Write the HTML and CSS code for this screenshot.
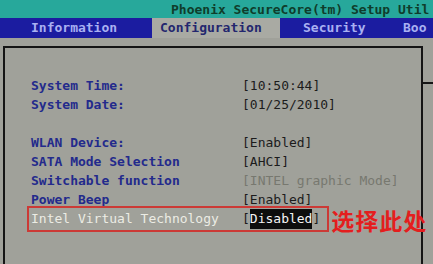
FILE: index.html
```html
<!DOCTYPE html>
<html>
<head>
<meta charset="utf-8">
<link rel="stylesheet" href="styles.css">
</head>
<body>
<div class="screen">
  <div class="title">Phoenix SecureCore(tm) Setup Util</div>
  <div class="menu">
    <div class="tab tab-info">Information</div>
    <div class="tab tab-config active">Configuration</div>
    <div class="tab tab-sec">Security</div>
    <div class="tab tab-boot">Boo</div>
  </div>
  <div class="main">
    <div class="panel">
      <div class="row"><span class="label">System Time:</span><span class="value">[10:50:44]</span></div>
      <div class="row"><span class="label">System Date:</span><span class="value">[01/25/2010]</span></div>
      <div class="row"></div>
      <div class="row"><span class="label">WLAN Device:</span><span class="value">[Enabled]</span></div>
      <div class="row"><span class="label">SATA Mode Selection</span><span class="value">[AHCI]</span></div>
      <div class="row"><span class="label">Switchable function</span><span class="value dim">[INTEL graphic Mode]</span></div>
      <div class="row"><span class="label">Power Beep</span><span class="value">[Enabled]</span></div>
      <div class="row row-mark">
        <div class="mark"><span class="label sel">Intel Virtual Technology</span><span class="value">[<span class="hl">Disabled</span>]</span></div>
        <span class="note">选择此处</span>
      </div>
    </div>
    <div class="help"></div>
  </div>
</div>
</body>
</html>
```

FILE: styles.css
```css
html, body {
  margin: 0;
  padding: 0;
}
body {
  width: 433px;
  height: 264px;
  overflow: hidden;
  background: #a0a19a;
  font-family: "DejaVu Sans Mono", "Liberation Mono", monospace;
  font-size: 13px;
  font-weight: bold;
}
.screen {
  width: 433px;
  height: 264px;
  overflow: hidden;
}
.title {
  height: 18px;
  line-height: 19px;
  background: #27a89b;
  color: #0f3d2b;
  padding-left: 171px;
  white-space: nowrap;
  overflow: hidden;
}
.menu {
  height: 20px;
  line-height: 20px;
  background: #1b1ca0;
  display: flex;
  white-space: nowrap;
  overflow: hidden;
}
.tab {
  color: #a9b0f2;
  flex: 0 0 auto;
}
.tab-info { margin-left: 23px; width: 121px; padding-left: 8px; }
.tab-config { width: 120px; padding-left: 8px; }
.tab-sec { width: 100px; padding-left: 23px; }
.tab.active {
  background: #a9aaa3;
  color: #23266e;
}
.main {
  display: flex;
  margin-top: 8px;
}
.panel {
  margin-left: 3px;
  width: 420px;
  height: 230px;
  border: 2px solid #151515;
  border-bottom: none;
  padding: 28px 0 0 26px;
  box-sizing: border-box;
  flex: 0 0 auto;
}
.help {
  flex: 1;
  margin-top: 36px;
  border-top: 2px solid #151515;
  height: 10px;
}
.row {
  height: 19px;
  line-height: 19px;
  display: flex;
  white-space: nowrap;
}
.label {
  display: inline-block;
  width: 211px;
  color: #232a8c;
}
.value {
  color: #1c1c1c;
  font-weight: normal;
}
.value.dim {
  color: #77786f;
}
.row-mark {
  align-items: center;
  overflow: visible;
}
.mark {
  border: 2px solid #cc3a36;
  margin-left: -4px;
  padding: 1px 7px 1px 2px;
  line-height: 19px;
  display: flex;
}
.label.sel {
  color: #ecece4;
  font-weight: normal;
}
.hl {
  background: #0d0d0d;
  color: #f4f4f4;
  display: inline-block;
  line-height: 20px;
}
.note {
  margin-left: 2px;
  margin-top: 4px;
  color: #e41e1e;
  font-family: "Noto Sans CJK SC", sans-serif;
  font-size: 23px;
  font-weight: bold;
  line-height: 25px;
  letter-spacing: 1px;
}
```
